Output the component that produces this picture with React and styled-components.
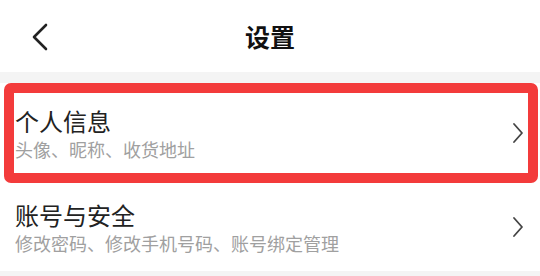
import React from "react";
import styled, { createGlobalStyle } from "styled-components";

const Global = createGlobalStyle`
  html, body { margin: 0; padding: 0; background: #f4f4f4; }
  body { font-family: "Noto Sans CJK SC", "Noto Sans", sans-serif; }
`;

const Page = styled.div`
  width: 540px;
  height: 276px;
  background: #f4f4f4;
  display: flex;
  flex-direction: column;
  overflow: hidden;
`;

const Header = styled.header`
  height: 72px;
  background: #ffffff;
  display: flex;
  align-items: center;
  justify-content: center;
  position: relative;
  flex-shrink: 0;
`;

const BackButton = styled.button`
  position: absolute;
  left: 28px;
  top: 22px;
  width: 24px;
  height: 30px;
  padding: 0;
  border: 0;
  background: none;
  display: flex;
  align-items: center;
  justify-content: center;
`;

const Title = styled.h1`
  margin: 0;
  font-size: 25px;
  font-weight: 700;
  color: #111;
  line-height: 1;
`;

const List = styled.div`
  margin-top: 11px;
  background: #fff;
  display: flex;
  flex-direction: column;
`;

const Row = styled.div`
  position: relative;
  height: ${(p) => p.$h}px;
  padding: 0 15px;
  display: flex;
  align-items: center;
  justify-content: space-between;
  box-sizing: border-box;
  ${(p) =>
    p.$highlight &&
    `
    &::after {
      content: "";
      position: absolute;
      top: 0;
      bottom: 0;
      left: 4px;
      right: 2px;
      border: 10px solid #f33b3b;
      border-radius: 7px;
      pointer-events: none;
    }
  `}
`;

const Texts = styled.div`
  display: flex;
  flex-direction: column;
`;

const RowTitle = styled.div`
  font-size: 24px;
  line-height: 32px;
  color: #222;
`;

const RowSub = styled.div`
  font-size: 18px;
  line-height: 24px;
  color: #a0a0a0;
`;

const Chevron = () => (
  <svg width="14" height="22" viewBox="0 0 14 22" fill="none">
    <path d="M3 2 L11 11 L3 20" stroke="#444" strokeWidth="1.8" strokeLinecap="round" strokeLinejoin="round" />
  </svg>
);

const BackIcon = () => (
  <svg width="18" height="28" viewBox="0 0 18 28" fill="none">
    <path d="M15 2 L3 14 L15 26" stroke="#222" strokeWidth="2.6" strokeLinecap="round" strokeLinejoin="round" />
  </svg>
);

const items = [
  { title: "个人信息", sub: "头像、昵称、收货地址", h: 100, highlight: true },
  { title: "账号与安全", sub: "修改密码、修改手机号码、账号绑定管理", h: 88 },
];

export default function App() {
  return (
    <Page>
      <Global />
      <Header>
        <BackButton aria-label="返回">
          <BackIcon />
        </BackButton>
        <Title>设置</Title>
      </Header>
      <List>
        {items.map((it) => (
          <Row key={it.title} $h={it.h} $highlight={it.highlight}>
            <Texts>
              <RowTitle>{it.title}</RowTitle>
              <RowSub>{it.sub}</RowSub>
            </Texts>
            <Chevron />
          </Row>
        ))}
      </List>
    </Page>
  );
}
